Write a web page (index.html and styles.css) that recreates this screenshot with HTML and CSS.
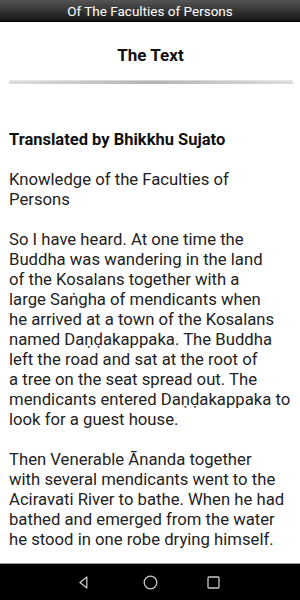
FILE: index.html
```html
<!DOCTYPE html>
<html lang="en">

<head>
    <meta charset="UTF-8">
    <meta name="viewport" content="width=device-width, initial-scale=1.0">
    <title>Of The Faculties of Persons</title>
    <link rel="stylesheet" href="styles.css">
</head>

<body>
    <div class="screen">
        <div class="topbar">Of The Faculties of Persons</div>

        <div class="content">
            <h1>The Text</h1>
            <div class="divider"></div>

            <p class="author">Translated by Bhikkhu Sujato</p>
            <p>Knowledge of the Faculties of<br>Persons</p>
            <!-- line breaks follow the balanced wrapping of the original -->
            <p>So I have heard. At one time the<br>
                Buddha was wandering in the land<br>
                of the Kosalans together with a<br>
                large Saṅgha of mendicants when<br>
                he arrived at a town of the Kosalans<br>
                named Daṇḍakappaka. The Buddha<br>
                left the road and sat at the root of<br>
                a tree on the seat spread out. The<br>
                mendicants entered Daṇḍakappaka to<br>
                look for a guest house.</p>
            <p>Then Venerable Ānanda together<br>
                with several mendicants went to the<br>
                Aciravati River to bathe. When he had<br>
                bathed and emerged from the water<br>
                he stood in one robe drying himself.</p>
        </div>

        <div class="navbar">
            <span class="nav-btn back">
                <svg width="9" height="13" viewBox="0 0 9 13">
                    <path d="M7.8 1 L1 6.5 L7.8 12 Z" fill="none" stroke="#c8c8c8" stroke-width="1.3" stroke-linejoin="round" />
                </svg>
            </span>
            <span class="nav-btn home">
                <svg width="15" height="15" viewBox="0 0 15 15">
                    <circle cx="7.5" cy="7.5" r="6.3" fill="none" stroke="#c8c8c8" stroke-width="1.3" />
                </svg>
            </span>
            <span class="nav-btn recent">
                <svg width="13" height="13" viewBox="0 0 13 13">
                    <rect x="1" y="1" width="11" height="11" rx="1" fill="none" stroke="#c8c8c8" stroke-width="1.3" />
                </svg>
            </span>
        </div>
    </div>
</body>

</html>
```

FILE: styles.css
```css
* {
    margin: 0;
    padding: 0;
    box-sizing: border-box;
}

body {
    font-family: Roboto, "Liberation Sans", sans-serif;
    background: #fff;
    color: #222;
}

.screen {
    height: 600px;
    display: flex;
    flex-direction: column;
    overflow: hidden;
}

.topbar {
    height: 22px;
    line-height: 23px;
    text-align: center;
    color: #fff;
    font-size: 13.5px;
    background: linear-gradient(#555, #151515);
    border-bottom: 1px solid #000;
}

.content {
    flex: 1;
    overflow: hidden;
    padding: 0 8px 0 9px;
    font-size: 16.7px;
    line-height: 20px;
}

h1 {
    font-size: 17px;
    font-weight: bold;
    text-align: center;
    color: #111;
    margin: 23px 0 15px;
}

.divider {
    height: 4px;
    margin: 0 -1px 46px 0;
    background: linear-gradient(90deg, #ddd, #b4b4b4 50%, #ddd);
    box-shadow: inset 0 1px 0 rgba(255, 255, 255, 0.4);
}

.content p {
    margin-bottom: 20px;
    white-space: nowrap;
}

.content .author {
    font-size: 16.5px;
    font-weight: bold;
    color: #111;
}

.navbar {
    height: 37px;
    background: #000;
    border-top: 1px solid #999;
    display: flex;
    align-items: center;
    padding-left: 75px;
}

.nav-btn {
    width: 16px;
    display: flex;
    justify-content: center;
}

.nav-btn.home {
    margin-left: 51px;
}

.nav-btn.recent {
    margin-left: 47px;
}
```
